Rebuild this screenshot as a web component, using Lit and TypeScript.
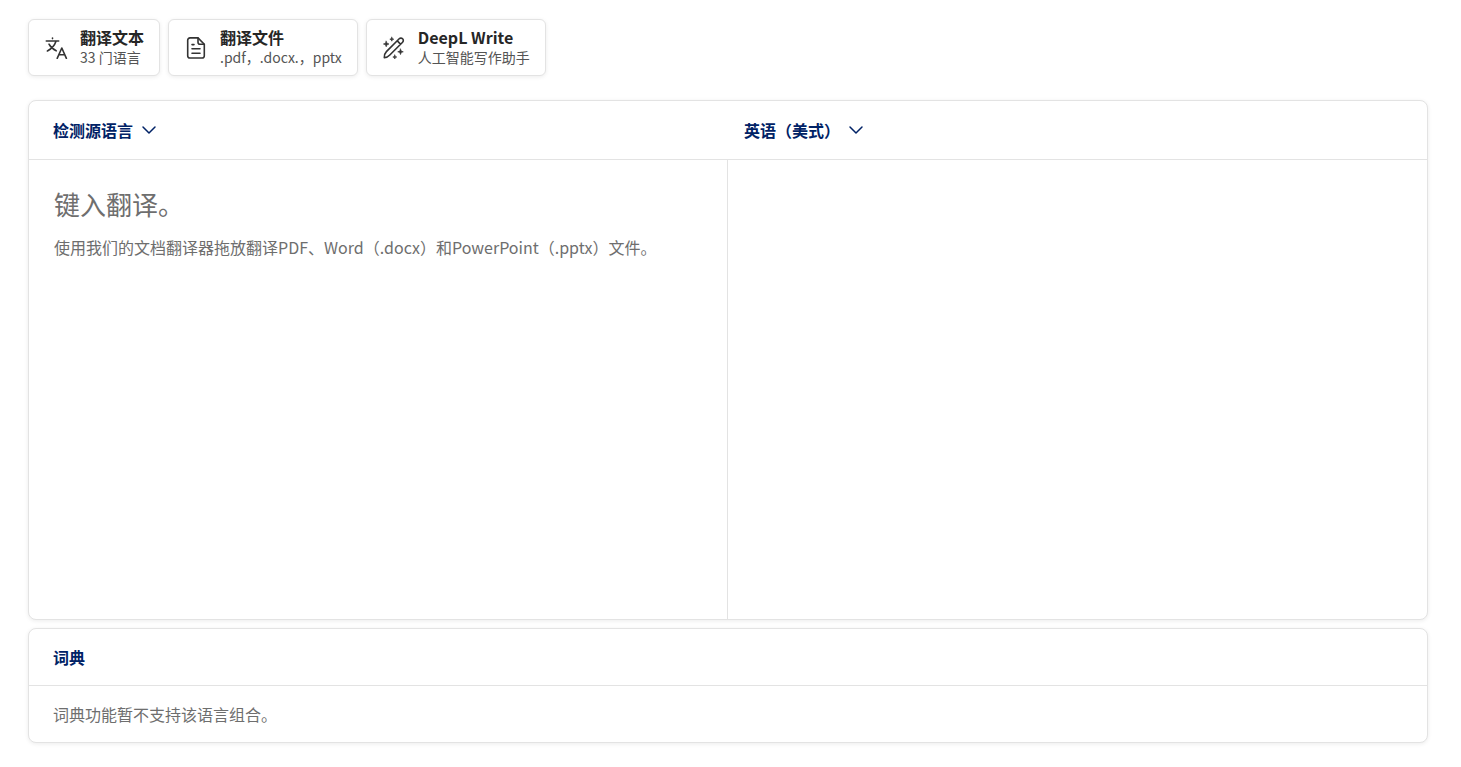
import { LitElement, html, css, svg } from "lit";
import { customElement, property, state } from "lit/decorators.js";

const translateIcon = svg`
  <path d="M8.500 2v.6M2.300 5h12.400M12 5.200c-1.300 4-4.200 7.400-8.600 9.800M5 8.200c1.600 3 4 5.200 7.200 6.600" />
  <path d="M13.200 22.300 17.800 12 22.400 22.300M14.900 18.700h5.800" />`;

const fileIcon = svg`
  <path d="M14 1.900H6A2.300 2.300 0 0 0 3.700 4.200v15.500A2.300 2.300 0 0 0 6 22h12a2.300 2.300 0 0 0 2.300-2.300V8.200z" />
  <path d="M14 2v4.200a2 2 0 0 0 2 2h4.200M8 8.600h2M8 12.800h8M8 17.200h8" />`;

const wandIcon = svg`
  <path d="M2.300 21.700c-.1-2.600.6-4.600 2.100-6.100L17.200 2.800a2.400 2.400 0 0 1 3.400 0 2.400 2.400 0 0 1 0 3.400L7.800 19c-1.400 1.500-3.100 2.500-5.500 2.700zM15.300 4.900l3.200 3.200" />
  <path class="solid" d="m9.800 1.200.6 1.400 1.400.6-1.400.6-.6 1.400-.6-1.400-1.400-.6 1.400-.6zM4.200 5.200l.8 2 2 .8-2 .8-.8 2-.8-2-2-.8 2-.8zM18.500 13l.8 2 2 .8-2 .8-.8 2-.8-2-2-.8 2-.8zM12.800 19l.6 1.400 1.400.6-1.400.6-.6 1.400-.6-1.400-1.400-.6 1.400-.6z" />`;

@customElement("mode-button")
class ModeButton extends LitElement {
  @property() heading = "";
  @property() detail = "";
  @property({ attribute: false }) icon: unknown;

  static styles = css`
    :host { display: block; }
    button {
      display: flex;
      align-items: center;
      gap: 12px;
      padding: 7px 15px 8px;
      border: 1px solid #e3e3e3;
      border-radius: 6px;
      background: #fff;
      box-shadow: 0 1px 4px rgba(0, 0, 0, 0.08);
      color: #262626;
      font: inherit;
      text-align: left;
      cursor: pointer;
    }
    svg {
      width: 24px;
      height: 24px;
      fill: none;
      stroke: #333;
      stroke-width: 1.6;
      stroke-linecap: round;
      stroke-linejoin: round;
    }
    .solid { fill: #333; stroke-width: 0.6; }
    .labels { display: grid; white-space: nowrap; }
    .heading { font-size: 16px; line-height: 20px; font-weight: 700; }
    .detail { font-size: 14px; line-height: 20px; color: #545454; }
  `;

  render() {
    return html`<button type="button">
      <svg viewBox="0 -1 24 24" aria-hidden="true">${this.icon}</svg>
      <span class="labels">
        <span class="heading">${this.heading}</span>
        <span class="detail">${this.detail}</span>
      </span>
    </button>`;
  }
}

@customElement("app-root")
class AppRoot extends LitElement {
  @state() private text = "";

  static styles = css`
    :host {
      display: flex;
      flex-direction: column;
      box-sizing: border-box;
      min-height: 100vh;
      padding: 19px 33px 24px 28px;
      background: #fff;
      color: #6e6e6e;
      font: 16px/24px "Noto Sans CJK SC", sans-serif;
    }
    nav { display: flex; flex-wrap: wrap; gap: 8px; margin-bottom: 24px; }
    .card {
      border: 1px solid #e3e3e3;
      border-radius: 8px;
      background: #fff;
      box-shadow: 0 1px 4px rgba(0, 0, 0, 0.08);
    }
    .translator {
      flex: 1;
      display: grid;
      grid-template-columns: 1fr 1fr;
      grid-template-rows: auto 1fr;
    }
    .language {
      display: flex;
      padding: 17px 16px;
      border-bottom: 1px solid #e3e3e3;
    }
    .language.source { padding-left: 24px; }
    .language button {
      display: flex;
      align-items: center;
      gap: 8px;
      padding: 0;
      border: 0;
      background: none;
      color: #002266;
      font: inherit;
      font-weight: 700;
      cursor: pointer;
    }
    .language svg {
      width: 16px;
      height: 16px;
      fill: none;
      stroke: currentColor;
      stroke-width: 1.5;
      stroke-linecap: round;
      stroke-linejoin: round;
    }
    .pane { display: grid; min-height: 240px; }
    .pane.source { border-right: 1px solid #e3e3e3; }
    .pane > * { grid-area: 1 / 1; }
    .hint { padding: 24px 25px; pointer-events: none; z-index: 1; }
    .hint[hidden] { display: none; }
    .lead { margin: 0 0 11px; font-size: 26px; line-height: 40px; }
    .hint p:last-child { margin: 0; }
    textarea {
      width: 100%;
      box-sizing: border-box;
      padding: 24px 25px;
      border: 0;
      outline: 0;
      resize: none;
      background: transparent;
      color: #262626;
      font-family: inherit;
      font-size: 26px;
      line-height: 40px;
    }
    .dictionary { margin-top: 8px; }
    .dictionary h2 {
      margin: 0;
      padding: 16px 24px;
      border-bottom: 1px solid #e3e3e3;
      color: #002266;
      font-size: 16px;
      line-height: 24px;
    }
    .dictionary p { margin: 0; padding: 16px 24px; }
  `;

  private onInput(e: Event) {
    this.text = (e.target as HTMLTextAreaElement).value;
  }

  private languageButton(label: string) {
    return html`<button type="button" aria-haspopup="listbox">
      ${label}
      <svg viewBox="0 0 16 16" aria-hidden="true"><path d="m2 5 6 6 6-6" /></svg>
    </button>`;
  }

  render() {
    return html`
      <nav>
        <mode-button heading="翻译文本" detail="33 门语言" .icon=${translateIcon}></mode-button>
        <mode-button heading="翻译文件" detail=".pdf，.docx.，pptx" .icon=${fileIcon}></mode-button>
        <mode-button heading="DeepL Write" detail="人工智能写作助手" .icon=${wandIcon}></mode-button>
      </nav>
      <section class="card translator">
        <div class="language source">${this.languageButton("检测源语言")}</div>
        <div class="language">${this.languageButton("英语（美式）")}</div>
        <div class="pane source">
          <textarea id="source" aria-labelledby="hint" .value=${this.text} @input=${this.onInput}></textarea>
          <label class="hint" id="hint" for="source" ?hidden=${this.text !== ""}>
            <p class="lead">键入翻译。</p>
            <p>使用我们的文档翻译器拖放翻译PDF、Word（.docx）和PowerPoint（.pptx）文件。</p>
          </label>
        </div>
        <div class="pane"></div>
      </section>
      <section class="card dictionary">
        <h2>词典</h2>
        <p>词典功能暂不支持该语言组合。</p>
      </section>
    `;
  }
}
